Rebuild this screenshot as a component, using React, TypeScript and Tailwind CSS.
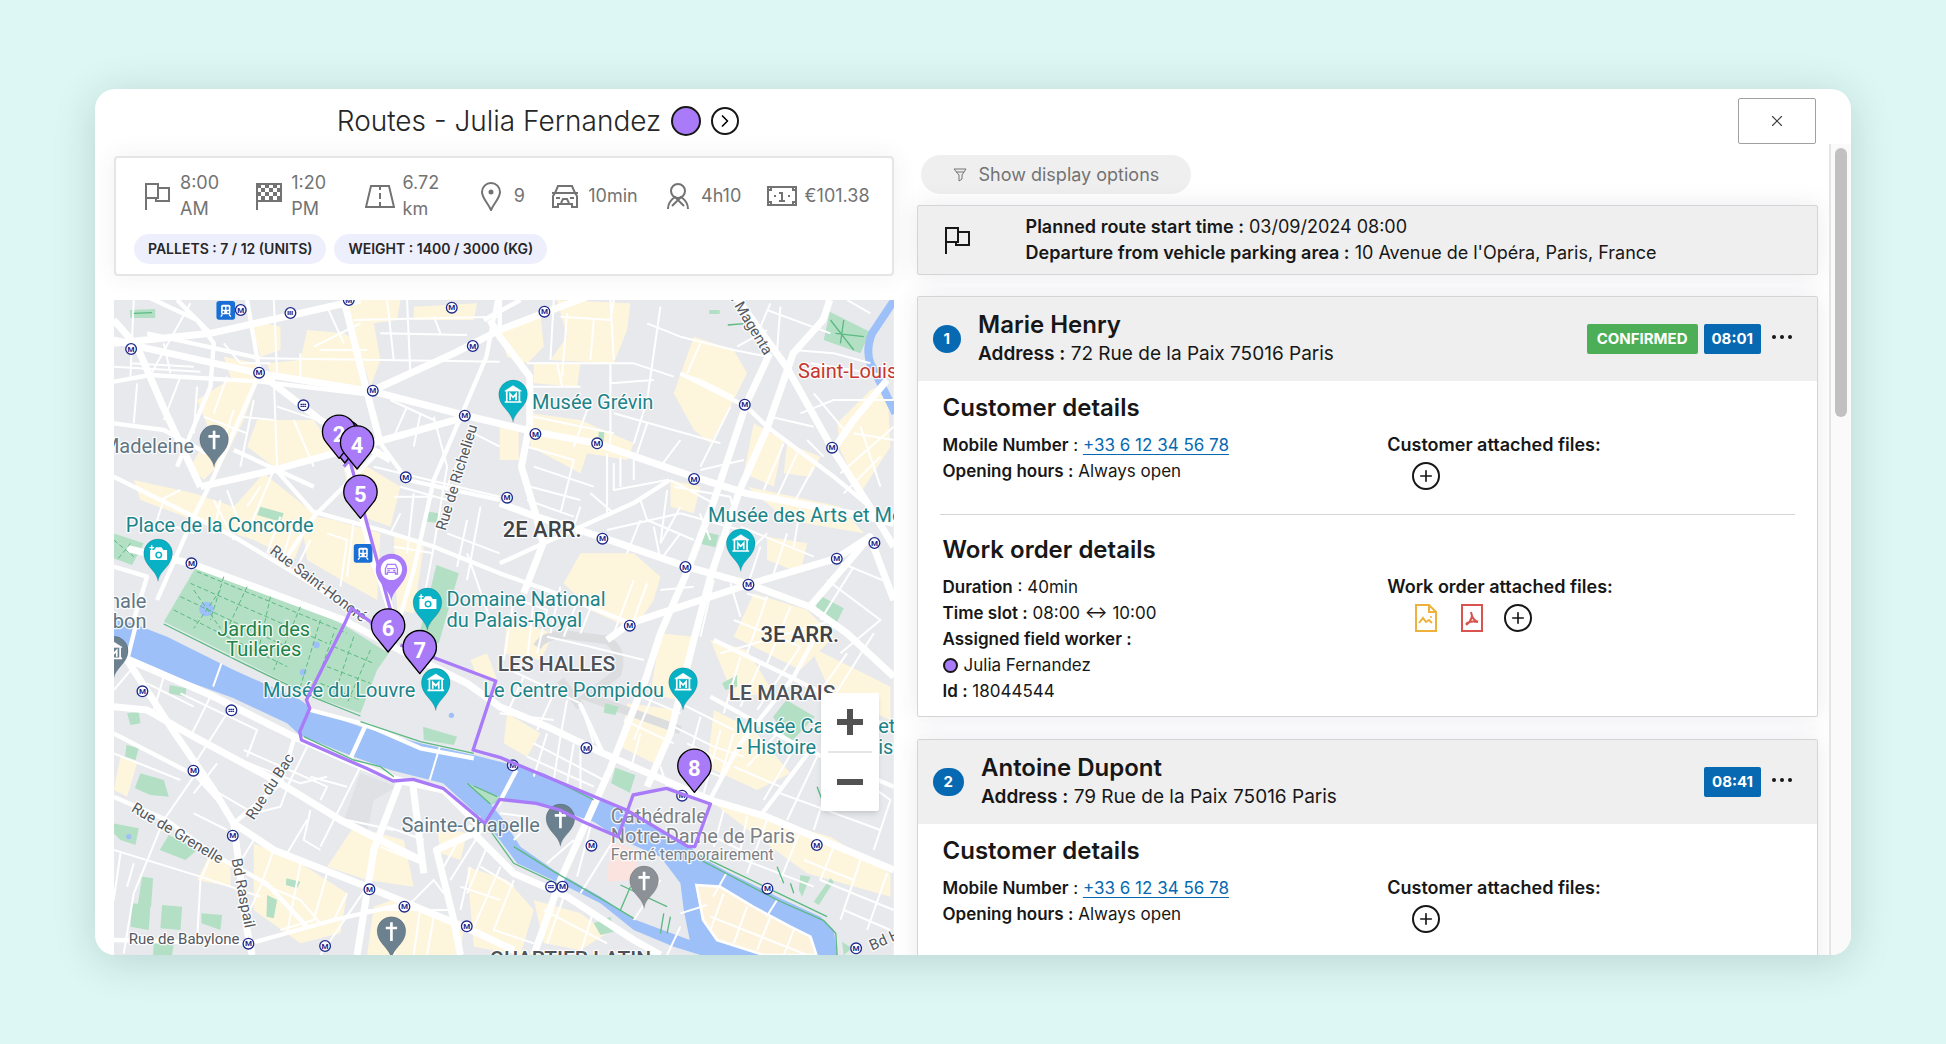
import type { ReactNode } from "react";
import { ChevronRight, Plus, X } from "lucide-react";

type Point = [number, number];

const PURPLE = "#a97bf8";

/* ---------- Map data (map units) ---------- */

const commercial = [
  "M250 300 L360 230 L430 250 L390 360 L330 480 L270 540 L230 500 L290 400 Z",
  "M410 60 L500 80 L500 150 L440 170 Z",
  "M330 170 L430 190 L420 260 L350 230 Z",
  "M580 90 L690 100 L740 130 L760 260 L640 250 L470 220 L460 190 L560 180 Z",
  "M690 0 L860 0 L850 60 L780 70 L800 180 L770 260 L720 90 Z",
  "M900 20 L1090 10 L1080 60 L900 60 Z",
  "M430 360 L600 360 L660 450 L480 500 L400 440 Z",
  "M60 540 L240 580 L360 620 L450 520 L600 640 L540 780 L420 720 L240 660 L80 600 Z",
  "M560 640 L660 660 L800 700 L790 900 L700 850 L580 780 Z",
  "M680 460 L760 500 L860 560 L830 680 L720 640 Z",
  "M840 700 L930 740 L900 940 L850 930 Z",
  "M1158 100 L1280 40 L1290 140 L1240 190 L1180 170 Z",
  "M1330 0 L1550 10 L1540 90 L1500 190 L1310 180 L1360 110 Z",
  "M1260 190 L1400 190 L1390 260 L1260 250 Z",
  "M1250 340 L1400 360 L1560 430 L1540 480 L1420 460 L1400 520 L1250 440 Z",
  "M1158 380 L1215 380 L1215 480 L1158 480 Z",
  "M1740 110 L1860 150 L1900 220 L1850 320 L1790 430 L1740 390 L1680 280 Z",
  "M1920 370 L2010 420 L1980 560 L1890 520 Z",
  "M2020 430 L2120 470 L2090 530 L2010 520 Z",
  "M2170 370 L2270 270 L2320 250 L2330 440 L2240 580 L2180 450 Z",
  "M1900 560 L2180 620 L2250 700 L2020 660 Z",
  "M1670 540 L1760 560 L1740 640 L1670 620 Z",
  "M1400 760 L1560 760 L1640 830 L1620 900 L1560 990 L1430 930 L1350 850 Z",
  "M1960 710 L2080 730 L2060 820 L1960 780 Z",
  "M1920 880 L2080 930 L2160 1010 L2060 1110 L1860 1010 Z",
  "M1640 1000 L1740 1010 L1690 1200 L1610 1180 Z",
  "M1540 1210 L1690 1230 L1640 1400 L1520 1340 Z",
  "M1180 960 L1320 1000 L1280 1080 L1170 1060 Z",
  "M1120 1060 L1150 1140 L1090 1130 L1070 1080 Z",
  "M1180 1240 L1280 1300 L1240 1370 L1170 1330 Z",
  "M1790 1020 L1900 1050 L1980 1180 L1860 1190 Z",
  "M2090 1040 L2330 1160 L2330 1260 L2150 1180 Z",
  "M1800 1230 L1920 1290 L2030 1420 L1930 1470 L1780 1400 Z",
  "M1800 1510 L2150 1610 L2330 1720 L2330 1790 L2080 1720 L1930 1610 Z",
  "M720 1580 L870 1620 L900 1760 L760 1740 L640 1700 Z",
  "M420 1630 L560 1690 L700 1780 L680 1900 L560 1930 L420 1830 Z",
  "M290 1660 L350 1700 L350 1760 L250 1740 Z",
  "M20 1370 L70 1390 L40 1490 L0 1470 Z",
  "M860 1790 L1050 1880 L1040 1965 L760 1965 L780 1820 Z",
  "M1060 1700 L1180 1740 L1260 1830 L1220 1965 L1080 1940 Z",
  "M1260 1800 L1400 1840 L1480 1900 L1400 1950 L1290 1930 Z",
  "M1770 1770 L1900 1830 L2060 1930 L1900 1930 L1800 1880 Z",
  "M970 1580 L1060 1600 L1040 1680 L980 1660 Z",
];

const parks = [
  "M250 795 L560 910 L690 975 L825 1060 L790 1110 L740 1240 L600 1190 L400 1090 L150 965 Z",
  "M0 700 L90 730 L55 795 L0 775 Z",
  "M968 795 L1035 820 L975 1030 L915 1010 Z",
  "M2148 35 L2268 95 L2240 160 L2130 120 Z",
  "M48 30 L124 27 L124 54 L50 54 Z",
  "M440 620 L510 640 L500 665 L430 645 Z",
  "M945 635 L975 640 L970 668 L940 665 Z",
  "M1455 395 L1472 395 L1468 440 L1452 430 Z",
  "M1770 695 L1815 705 L1805 742 L1762 732 Z",
  "M1786 30 L1818 30 L1818 42 L1786 42 Z",
  "M2115 885 L2190 925 L2165 975 L2105 930 Z",
  "M1978 1250 L2018 1200 L2103 1250 L2028 1330 Z",
  "M1505 1403 L1565 1425 L1548 1478 L1492 1450 Z",
  "M1825 1150 L1870 1125 L1870 1160 L1835 1170 Z",
  "M1474 1210 L1515 1220 L1505 1245 L1470 1238 Z",
  "M1440 1870 L1490 1850 L1500 1895 L1460 1905 Z",
  "M80 1420 L150 1440 L165 1490 L110 1485 L63 1465 Z",
  "M165 1605 L215 1630 L250 1650 L215 1680 L138 1650 Z",
  "M0 1570 L75 1585 L65 1635 L20 1620 L0 1600 Z",
  "M85 1730 L118 1735 L112 1820 L72 1815 Z",
  "M55 1810 L110 1815 L105 1890 L50 1880 Z",
  "M145 1815 L205 1820 L200 1890 L140 1885 Z",
  "M263 1840 L325 1845 L320 1890 L263 1870 Z",
  "M460 1785 L490 1800 L480 1855 L458 1850 Z",
  "M40 1240 L75 1235 L80 1270 L50 1275 Z",
  "M168 1155 L218 1165 L215 1190 L165 1180 Z",
  "M38 1335 L75 1345 L65 1380 L34 1370 Z",
  "M928 1280 L1030 1310 L1020 1335 L930 1320 Z",
  "M518 1735 L560 1745 L550 1765 L516 1755 Z",
  "M2150 1735 L2160 1745 L2115 1815 L2100 1805 Z",
  "M2060 1725 L2090 1730 L2065 1790 L2055 1770 Z",
  "M1690 1860 L1730 1920 L1690 1905 Z",
  "M120 1930 L180 1930 L175 1965 L118 1965 Z",
  "M2185 1925 L2215 1945 L2190 1965 Z",
];

const parkPaths =
  "M250 815 L700 1000 M230 850 L640 1030 M200 890 L560 1060 M180 930 L520 1100 M330 830 L290 960 M400 860 L330 1010 M470 890 L430 1070 M560 920 L480 1110 M620 960 L560 1160 M660 1000 L600 1170 M720 1010 L660 1190 M770 1050 L700 1210 M240 870 L320 985 M320 870 L240 985 M660 1040 L780 1090 M640 1100 L770 1150 M620 1150 L740 1200 M0 720 L60 770 M50 730 L10 780";

const greenLines =
  "M150 972 L400 1096 L600 1192 L740 1248 M570 1310 L720 1380 L800 1400 L840 1430 M740 1265 L920 1325 L1080 1360 M1760 1680 L1990 1800 L2130 1862 L2166 1900 L2170 1965 M1745 1660 L1990 1778 L2140 1850 M1200 1640 L1320 1715 L1460 1795 L1560 1855 M1110 1565 L1200 1690 L1360 1765 M1290 1425 L1440 1500 M1060 1450 L1130 1512 M1080 1458 L1150 1490 M1520 1830 L1550 1760 M1520 1755 L1660 1820 M1650 1840 L1640 1900 M1670 1850 L1660 1900 M1990 1700 L2010 1750 M2030 1750 L2040 1780 M2110 1460 L2125 1500 M1842 75 L1900 70 M60 40 L115 38 M2150 60 L2220 150 M2165 100 L2250 110 M2190 60 L2180 130";

const majorRoads = [
  "M0 130 L290 100 L670 15 L740 0",
  "M0 120 L100 145 L438 220 L780 275 L1050 345 L1258 395 L1450 430 L1738 530 L1898 580 L2258 650 L2340 670",
  "M0 60 L70 140 L150 325 L260 560",
  "M260 560 L480 510 L660 460 L810 420 L1060 350",
  "M438 220 L620 360 L760 440 L830 480",
  "M690 0 L758 270 L800 430",
  "M700 490 L770 740 L830 930 L850 1020",
  "M780 270 L1020 160 L1158 90 L1420 -10",
  "M1128 60 L1158 110 L1248 230 L1248 370 L1223 500 L1268 650 L1288 730 L1230 880",
  "M1968 160 L1898 310 L1798 610 L1718 820 L1640 1000 L1598 1130 L1488 1410 L1340 1740 L1260 1965",
  "M1858 -20 L2018 200 L2158 450 L2268 620 L2340 740",
  "M2148 0 L2128 60 L2038 160 L1958 390 L1878 570 L1790 830 L1740 1020 L1670 1300 L1600 1460",
  "M1158 610 L1268 650 L1458 710 L1718 800 L1898 850 L2088 920 L2200 1000 L2340 1130",
  "M1480 1020 L1548 970 L1898 855 L2168 775 L2268 710",
  "M2158 450 L2220 360 L2320 240",
  "M2088 920 L2268 710 L2340 900",
  "M40 745 L230 790 L690 960 L858 1050 L1060 1150 L1158 1220 L1300 1280 L1468 1360 L1650 1440 L1790 1500 L1958 1550 L2340 1710",
  "M0 1060 L60 1085 L290 1185 L540 1310 L720 1390 L850 1440 L990 1470 L1110 1590",
  "M40 1080 L170 1280 L300 1470 L360 1570 L400 1890 L415 1965",
  "M0 1220 L100 1230 L240 1310 L500 1450 L680 1560 L920 1680",
  "M360 1570 L480 1650 L760 1760 L880 1810 L1050 1880 L1200 1950",
  "M1060 1580 L1200 1720 L1360 1790 L1560 1920 L1640 1965",
  "M860 1440 L780 1650 L730 1965",
  "M898 1460 L930 1720",
  "M1100 1590 L968 1650 L1020 1860 L1040 1965",
];

const mediumRoads = [
  "M0 530 L140 600 L360 710 L560 830 L760 960",
  "M400 0 L438 220 L300 530 L240 650",
  "M478 500 L598 635 L800 690 L960 740 L1158 820 L1300 870 L1550 970",
  "M1150 0 L1118 170 L960 540 L900 810 L830 1050",
  "M1700 220 L1898 320 L1960 380 L2160 530 L2268 620",
  "M1158 790 L1290 730 L1558 610 L1668 540",
  "M540 1320 L500 1450 L360 1570",
  "M0 1490 L158 1560 L310 1670 L458 1750 L580 1880",
  "M0 1920 L410 1930 L660 1860 L880 1810",
  "M0 1300 L250 1430 L340 1530",
  "M1790 1190 L2058 1340 L2340 1460",
  "M1788 1500 L1880 1330 L2040 1130 L2110 1000",
  "M1938 1550 L2090 1350",
  "M1800 1020 L2028 1130 L2340 1290",
  "M0 245 L110 225 L440 245 L780 285",
  "M100 -10 L250 60 L300 130 L290 260 L190 500",
  "M190 0 L290 100 M0 370 L150 390 L280 460",
  "M0 800 L100 830 L60 960",
  "M100 100 L440 175",
  "M1398 1210 L1468 1360",
  "M758 1270 L708 1380",
  "M70 960 L40 1080",
  "M590 1230 L760 1275 L920 1345 L1080 1375",
  "M1208 1410 L1150 1520",
  "M500 800 L600 650 L800 450",
  "M360 450 L600 560 M240 650 L130 900",
  "M800 430 L880 540 L1158 600",
  "M1158 110 L1158 0 M1110 60 L1220 0",
];

const minorRoads = [
  "M60 0 L50 230 M110 225 L230 10 M0 200 L260 215 M50 190 L240 200 M200 230 L150 360 M70 250 L60 370 M150 130 L170 220 M330 130 L380 190 L470 190",
  "M440 175 L1158 185 M480 0 L490 220 M560 160 L560 240 M600 140 L740 70 M620 150 L760 150 M640 20 L690 130 M800 100 L1060 105 M820 0 L840 180 M880 0 L890 230 M960 50 L980 100 M720 60 L1158 50",
  "M480 230 L490 500 M540 360 L600 500 M420 300 L380 500 M360 330 L310 480 M340 230 L300 340 M270 350 L400 400 M250 260 L240 400 M380 350 L480 360 M490 320 L640 370",
  "M830 300 L960 360 M880 320 L840 410 M920 340 L900 440 M960 350 L1000 500 M780 500 L1158 590 M860 560 L1000 600 M840 590 L960 590 M900 580 L880 760 M1000 500 L960 740 M1080 400 L1158 440 M1060 420 L1000 560",
  "M480 510 L400 700 M440 560 L400 620 M340 570 L380 680 M300 600 L360 720 M200 570 L140 600 M150 600 L130 660 L240 700 M320 600 L300 700 M500 650 L460 760 M540 660 L500 800 M590 720 L540 820",
  "M640 700 L700 720 L680 860 M720 660 L700 830 M760 760 L820 900 M860 640 L830 700 M840 740 L960 760 M1060 660 L1030 800 M1100 620 L1060 840 M960 740 L920 950 M1000 700 L1158 760 M1060 760 L1130 960",
  "M1320 0 L1310 180 M1500 0 L1490 60 L1340 50 M1360 40 L1345 230 M1440 60 L1430 180 M1500 180 L1490 0 M1640 20 L1600 300 M1600 70 L1700 110 L1860 150 L1960 170 M1240 190 L1560 190 L1680 230 M1240 260 L1400 260 M1330 190 L1345 260 M1490 190 L1490 250 L1620 240",
  "M1760 130 L1720 220 M1600 300 L1560 430 M1490 230 L1490 430 M1500 340 L1820 430 M1420 330 L1380 440 M1260 350 L1500 400 M1600 370 L1570 460 M1700 420 L1640 500 M1850 320 L1760 500 M1700 220 L1760 240 L1860 290 M1760 510 L1890 480",
  "M1240 440 L1380 480 L1340 640 M1260 500 L1440 560 M1250 560 L1400 600 M1240 600 L1380 650 M1480 460 L1480 640 M1500 490 L1500 570 L1660 540 M1520 470 L1520 560 M1560 480 L1560 540 M1580 600 L1600 660 L1740 720 M1430 580 L1500 640 M1480 690 L1700 640 M1400 620 L1380 680",
  "M1680 560 L1850 590 L1860 640 M1660 570 L1640 730 M1700 640 L1880 690 M1640 730 L1700 620 M1580 660 L1540 760 M1620 680 L1640 780 L1700 700 M1670 540 L1800 610 M2060 620 L2040 740 M1880 680 L2100 770 M1880 780 L1960 700 M1940 740 L1900 860 M2020 700 L1980 820",
  "M1960 400 L1900 540 M2010 430 L1950 570 M2050 460 L1990 590 M2100 500 L2040 610 M2080 420 L2130 470 M1970 350 L2100 380 M2060 340 L2160 300 L2340 300 M2100 280 L2200 400 M2220 400 L2340 420 M2340 380 L2180 520 M2240 380 L2300 560 M2300 470 L2190 580",
  "M2040 150 L2160 160 L2270 190 M2060 130 L2150 20 M2000 20 L1990 150 M1960 30 L2150 100 M1940 80 L1970 10 M2200 0 L2270 40 M2090 190 L2340 230 M1960 90 L1870 140",
  "M1560 840 L1500 1000 M1600 850 L1560 960 M1640 870 L1740 860 M1758 640 L1790 720 M1800 840 L1760 1010 M1850 850 L1880 950 M1900 880 L1960 900 M1860 960 L2060 1040 M1820 1060 L2160 960 M1960 890 L1900 1060 M2030 920 L1960 1090 M2140 840 L2300 960 L2180 1060 M2220 800 L2120 960 M2160 780 L2330 850",
  "M1158 880 L1300 930 L1270 1060 M1340 860 L1310 1000 M1200 900 L1170 1080 M1260 900 L1240 1080 M1400 880 L1350 1010 M1440 900 L1400 1000 M1300 1010 L1430 1040 L1590 1080 M1190 1110 L1400 1210 L1440 1330 M1320 1180 L1270 1290 M1360 1200 L1340 1310 M1230 1130 L1180 1240",
  "M1158 1240 L1320 1260 M1300 1300 L1260 1430 M1340 1310 L1320 1440 M1380 1330 L1360 1450 M1260 1330 L1470 1440 M1240 1370 L1440 1460 M1500 1370 L1480 1430 M1400 1340 L1400 1470",
  "M1560 1180 L1700 1240 M1530 1260 L1680 1330 M1580 1300 L1550 1410 M1620 1180 L1560 1320 M1640 1400 L1660 1460 M1680 1280 L1800 1340 L1890 1370 M1700 1210 L1860 1290 M1760 1250 L1720 1400 M1820 1290 L1770 1480 M1860 1300 L1820 1430 M1720 1330 L1840 1390 M1700 1380 L1820 1430",
  "M1880 1070 L1830 1240 M1940 1090 L1880 1220 M1930 1230 L2060 1040 M2000 1290 L1900 1400 M2050 1330 L1950 1500 M2110 1370 L2020 1560 M2160 1400 L2100 1590 M1860 1400 L2000 1460 M2200 1060 L2100 1200 M2280 1000 L2160 1190 M2260 1250 L2180 1400 M2220 1420 L2330 1500 L2280 1650 M2000 1480 L2300 1590",
  "M1830 1530 L1800 1640 M1900 1550 L1880 1650 L1780 1600 M1960 1560 L1900 1720 M2060 1590 L2000 1740 M1840 1660 L2100 1760 M2160 1640 L2120 1740 L2340 1830 M2240 1680 L2180 1860 M2320 1720 L2260 1890 M2070 1680 L2220 1740 M2190 1830 L2330 1890",
  "M1158 1540 L1240 1550 M1260 1560 L1200 1620 M1430 1580 L1390 1730 M1500 1620 L1400 1780 M1380 1620 L1300 1690 M1560 1860 L1640 1740 M1700 1880 L1660 1965 M1400 1960 L1440 1830 M1290 1830 L1480 1930 M1350 1790 L1300 1930 M1200 1740 L1140 1890 L1260 1930 M1160 1700 L1080 1880",
  "M60 1100 L0 1170 M120 1230 L150 1130 M200 1180 L430 1290 L400 1370 M100 1150 L240 1220 M290 1190 L230 1310 M340 1240 L250 1380 M380 1380 L560 1450 L640 1430 M460 1280 L720 1380 M580 1340 L520 1460 M390 1350 L640 1460 L620 1500 M740 1400 L620 1640 M700 1460 L590 1430",
  "M240 1430 L150 1560 L60 1780 L30 1960 M310 1390 L240 1480 M0 1360 L200 1440 M0 1650 L260 1730 L440 1790 M300 1650 L260 1740 L250 1920 M20 1660 L0 1800 M60 1690 L40 1760 M300 1470 L420 1540 L500 1520 L530 1440 M340 1590 L240 1540 M420 1620 L370 1700",
  "M590 1530 L570 1620 L620 1650 M520 1660 L580 1560 M700 1560 L840 1590 M480 1650 L440 1760 L400 1850 M560 1690 L520 1900 M440 1750 L560 1800 L620 1870 M640 1720 L600 1860 L500 1890 M700 1780 L660 1860 M760 1760 L620 1965 M820 1580 L930 1620 M800 1640 L920 1690",
  "M880 1820 L960 1740 L990 1780 M920 1820 L900 1965 M760 1830 L1010 1830 M870 1860 L840 1965 M960 1850 L940 1965 M1040 1760 L1160 1800 M1070 1700 L1040 1830 M1010 1740 L1110 1580 M1120 1640 L1060 1780 M1100 1700 L1200 1760 M940 1560 L1080 1590 M1040 1610 L990 1700",
  "M1830 1780 L1790 1890 M1900 1820 L1860 1930 M1970 1850 L1930 1950 M2040 1890 L2010 1965 M1790 1850 L2080 1965",
  "M323 1090 L298 1160 M978 1340 L948 1440 M1838 1720 L1798 1790 M1990 1800 L1958 1850 M1700 1840 L1780 1815",
];

const metros: Point[] = [
  [381, 30], [705, 0], [1014, 23], [52, 147], [1077, 138], [436, 218], [777, 272],
  [1053, 347], [876, 532], [233, 790], [1292, 35], [1893, 314], [1265, 402],
  [1450, 430], [2155, 443], [1741, 537], [1180, 593], [1466, 716], [2282, 729],
  [2169, 776], [1715, 801], [1904, 854], [1548, 977], [86, 1174], [239, 1412],
  [357, 1607], [767, 1768], [872, 1820], [1059, 1879], [404, 1931], [634, 1938],
  [1418, 1344], [1197, 1396], [1705, 1487], [1433, 1637], [1346, 1760],
  [2109, 1635], [1961, 1766], [2227, 1945],
];

const rers: Point[] = [[530, 39], [569, 316], [353, 1231], [1312, 1760]];
const trains: Point[] = [[336, 31], [748, 760]];

type PoiKind = "museum" | "camera" | "church";

const pois: { x: number; y: number; kind: PoiKind; color: string }[] = [
  { x: 301, y: 418, kind: "church", color: "#6b8190" },
  { x: 133, y: 760, kind: "camera", color: "#08b1c4" },
  { x: 941, y: 907, kind: "camera", color: "#08b1c4" },
  { x: 1198, y: 283, kind: "museum", color: "#08b1c4" },
  { x: 1881, y: 730, kind: "museum", color: "#08b1c4" },
  { x: 966, y: 1148, kind: "museum", color: "#08b1c4" },
  { x: 1708, y: 1146, kind: "museum", color: "#08b1c4" },
  { x: 0, y: 1052, kind: "museum", color: "#6b8190" },
  { x: 1340, y: 1555, kind: "church", color: "#6b8190" },
  { x: 1591, y: 1741, kind: "church", color: "#8b9196" },
  { x: 833, y: 1893, kind: "church", color: "#6b8190" },
];

const stopPins = [
  { x: 693, y: 409, label: "" },
  { x: 676, y: 395, label: "2" },
  { x: 730, y: 427, label: "4" },
  { x: 740, y: 575, label: "5" },
  { x: 823, y: 976, label: "6" },
  { x: 918, y: 1041, label: "7" },
  { x: 1742, y: 1397, label: "8" },
];

type Label = {
  x: number;
  y: number;
  text: string;
  color: string;
  size?: number;
  anchor?: "start" | "middle" | "end";
  angle?: number;
  weight?: number;
};

const TEAL = "#1b8489";
const SLATE = "#5f7684";
const STREET = "#55585c";

const labels: Label[] = [
  { x: 241, y: 460, text: "Madeleine", color: SLATE, anchor: "end" },
  { x: 36, y: 697, text: "Place de la Concorde", color: TEAL },
  { x: 1255, y: 327, text: "Musée Grévin", color: TEAL },
  { x: 998, y: 918, text: "Domaine National", color: TEAL },
  { x: 998, y: 980, text: "du Palais-Royal", color: TEAL },
  { x: 450, y: 1007, text: "Jardin des", color: "#22834a", anchor: "middle" },
  { x: 450, y: 1069, text: "Tuileries", color: "#22834a", anchor: "middle" },
  { x: 448, y: 1191, text: "Musée du Louvre", color: TEAL },
  { x: 1651, y: 1190, text: "Le Centre Pompidou", color: TEAL, anchor: "end" },
  { x: 1865, y: 1300, text: "Musée Carnavalet", color: TEAL },
  { x: 1868, y: 1362, text: "- Histoire de Paris", color: TEAL },
  { x: 1783, y: 667, text: "Musée des Arts et Métiers", color: TEAL },
  { x: 2053, y: 233, text: "Saint-Louis", color: "#c5362e" },
  { x: 863, y: 1597, text: "Sainte-Chapelle", color: SLATE },
  { x: 1491, y: 1568, text: "Cathédrale", color: "#7c8186" },
  { x: 1491, y: 1630, text: "Notre-Dame de Paris", color: "#7c8186" },
  { x: 1491, y: 1680, text: "Fermé temporairement", color: "#7c8186", size: 48 },
  { x: 98, y: 925, text: "Assemblée nationale", color: SLATE, anchor: "end" },
  { x: 98, y: 985, text: "Palais Bourbon", color: SLATE, anchor: "end" },
  { x: 1285, y: 710, text: "2E ARR.", color: "#3f4246", anchor: "middle", size: 66, weight: 500 },
  { x: 2058, y: 1026, text: "3E ARR.", color: "#3f4246", anchor: "middle", size: 66, weight: 500 },
  { x: 1328, y: 1113, text: "LES HALLES", color: "#4e5156", anchor: "middle", size: 63, weight: 500 },
  { x: 1845, y: 1200, text: "LE MARAIS", color: "#4e5156", size: 63, weight: 500 },
  { x: 1370, y: 1998, text: "QUARTIER LATIN", color: "#4e5156", anchor: "middle", size: 63, weight: 500 },
  { x: 995, y: 694, text: "Rue de Richelieu", color: STREET, size: 45, angle: -73 },
  { x: 466, y: 758, text: "Rue Saint-Honoré", color: STREET, size: 45, angle: 37 },
  { x: 420, y: 1562, text: "Rue du Bac", color: STREET, size: 45, angle: -57 },
  { x: 50, y: 1532, text: "Rue de Grenelle", color: STREET, size: 45, angle: 31 },
  { x: 353, y: 1678, text: "Bd Raspail", color: STREET, size: 45, angle: 79 },
  { x: 45, y: 1933, text: "Rue de Babylone", color: STREET, size: 45 },
  { x: 2275, y: 1952, text: "Bd Henri IV", color: STREET, size: 45, angle: -24 },
  { x: 1952, y: 168, text: "Bd de Magenta", color: STREET, size: 45, angle: 59, anchor: "end" },
];

/* ---------- Map pieces ---------- */

function PoiGlyph({ kind }: { kind: PoiKind }) {
  if (kind === "church") {
    return <path d="M0 -26 V30 M-17 -9 H17" stroke="#fff" strokeWidth="8" fill="none" />;
  }
  if (kind === "camera") {
    return (
      <g>
        <path d="M-24 -10 H-12 L-6 -18 H10 L16 -10 H27 V20 H-24 Z" fill="#fff" />
        <circle cx="2" cy="5" r="10" fill="#08b1c4" stroke="#08b1c4" />
        <circle cx="2" cy="5" r="6" fill="#fff" />
        <path d="M-19 -24 V-10 M-26 -17 H-12" stroke="#fff" strokeWidth="4" />
      </g>
    );
  }
  return (
    <g fill="none" stroke="#fff" strokeWidth="5">
      <path d="M-25 -10 L0 -26 L25 -10 Z" fill="#fff" strokeWidth="2" />
      <path d="M-19 -10 V22 M19 -10 V22 M-25 23 H25" />
      <path d="M-9 18 V-1 L0 9 L9 -1 V18" />
    </g>
  );
}

function CityMap() {
  return (
    <svg
      viewBox="0 0 2340 1965"
      preserveAspectRatio="xMidYMid slice"
      className="absolute inset-0 h-full w-full font-[Roboto,sans-serif]"
      role="img"
      aria-label="Map"
    >
      <rect width="2340" height="1965" fill="#e7e9ed" />
      <g fill="#fef5dd">
        {commercial.map((d) => (
          <path key={d} d={d} />
        ))}
      </g>
      <path
        d="M1270 1040 Q1300 990 1400 1010 L1480 1020 Q1530 1050 1510 1120 L1420 1190 L1700 1290 M1340 1140 L1400 1220"
        fill="none"
        stroke="#dcdddf"
        strokeWidth="26"
      />
      <path d="M850 1460 L780 1500 L760 1600 L690 1560 L740 1420 Z" fill="#dfe1e4" />
      <g fill="#b3e0c4">
        {parks.map((d) => (
          <path key={d} d={d} />
        ))}
      </g>

      {/* Seine and canal */}
      <g fill="#9dc0f9">
        <path d="M0 960 L55 970 L160 1010 L360 1110 L560 1200 L600 1230 L740 1280 L920 1330 L1080 1365 L1158 1385 L1290 1420 L1440 1495 L1540 1530 L1730 1640 L1760 1670 L1840 1715 L1990 1790 L2120 1850 L2160 1890 L2170 1965 L1760 1965 L1680 1940 L1560 1890 L1460 1810 L1360 1760 L1210 1690 L1158 1620 L1108 1560 L988 1450 L830 1410 L720 1370 L558 1305 L520 1270 L360 1195 L210 1140 L33 1070 L0 1060 Z" />
        <circle cx="278" cy="927" r="22" />
        <circle cx="608" cy="1035" r="10" />
        <circle cx="568" cy="1117" r="10" />
        <circle cx="1013" cy="1246" r="8" />
        <circle cx="45" cy="1610" r="8" />
      </g>
      <path
        d="M2345 -5 L2275 100 Q2255 150 2270 190 L2298 245 L2345 340"
        fill="none"
        stroke="#9dc0f9"
        strokeWidth="24"
      />
      <path
        d="M1053 1447 L1133 1515 L1158 1500 L1290 1515 L1440 1565 L1510 1612 L1570 1640 L1640 1670 L1700 1750 L1710 1830 L1728 1920 L1560 1858 L1460 1790 L1320 1710 L1220 1640 L1165 1555 L1133 1515 Z"
        fill="#e7e9ed"
      />
      <path d="M1053 1447 L1133 1515 L1158 1492 Z" fill="#b3e0c4" />
      <path d="M1490 1625 L1570 1650 L1568 1740 L1480 1745 Z" fill="#fbe3e0" />
      <path
        d="M1748 1755 L1818 1760 L1918 1820 L2030 1880 L2090 1910 L2108 1965 L1950 1965 L1810 1920 L1768 1860 Z"
        fill="#fdf3dc"
        stroke="#fff"
        strokeWidth="8"
      />

      {/* Streets */}
      <g fill="none" stroke="#fff" strokeLinejoin="round">
        <g strokeWidth="6">
          {minorRoads.map((d) => (
            <path key={d} d={d} />
          ))}
        </g>
        <g strokeWidth="13">
          {mediumRoads.map((d) => (
            <path key={d} d={d} />
          ))}
        </g>
        <g strokeWidth="21">
          {majorRoads.map((d) => (
            <path key={d} d={d} />
          ))}
        </g>
      </g>
      <path d={parkPaths} fill="none" stroke="#5cb982" strokeWidth="3" strokeDasharray="14 8" />
      <path d={greenLines} fill="none" stroke="#5cb982" strokeWidth="4" />

      {/* Transit stations */}
      {metros.map(([x, y]) => (
        <g key={`${x}-${y}`} transform={`translate(${x} ${y})`}>
          <circle r="16" fill="#fff" stroke="#1f2a8c" strokeWidth="4" />
          <text y="8" fontSize="24" fontWeight="700" textAnchor="middle" fill="#1f2a8c">
            M
          </text>
        </g>
      ))}
      {rers.map(([x, y]) => (
        <g key={`${x}-${y}`} transform={`translate(${x} ${y})`}>
          <circle r="16" fill="#fff" stroke="#1f2a8c" strokeWidth="4" />
          <path d="M-9 -3 H9 M-9 3 H9" stroke="#1f2a8c" strokeWidth="4" strokeDasharray="5 1" />
        </g>
      ))}
      {trains.map(([x, y]) => (
        <g key={`${x}-${y}`} transform={`translate(${x} ${y})`}>
          <rect x="-28" y="-28" width="56" height="56" rx="8" fill="#1a6fd6" />
          <rect x="-14" y="-17" width="28" height="29" rx="5" fill="#fff" />
          <path d="M-9 -11 H-2 V-2 H-9 Z M2 -11 H9 V-2 H2 Z" fill="#1a6fd6" />
          <circle cx="-7" cy="5" r="3" fill="#1a6fd6" />
          <circle cx="7" cy="5" r="3" fill="#1a6fd6" />
          <path d="M-10 12 L-15 19 M10 12 L15 19" stroke="#fff" strokeWidth="4" />
        </g>
      ))}

      {/* Points of interest */}
      {pois.map((p) => (
        <g key={`${p.x}-${p.y}`} transform={`translate(${p.x} ${p.y})`}>
          <path
            d="M0 84 C-5 50 -43 38 -43 0 A43 43 0 1 1 43 0 C43 38 5 50 0 84 Z"
            fill={p.color}
            stroke="#00000030"
            strokeWidth="2"
          />
          <PoiGlyph kind={p.kind} />
        </g>
      ))}

      {labels.map((l) => (
        <text
          key={l.text}
          transform={`translate(${l.x} ${l.y}) rotate(${l.angle ?? 0})`}
          fontSize={l.size ?? 60}
          fontWeight={l.weight ?? 400}
          textAnchor={l.anchor ?? "start"}
          fill={l.color}
          stroke="#ffffffd9"
          strokeWidth="8"
          strokeLinejoin="round"
          paintOrder="stroke"
        >
          {l.text}
        </text>
      ))}

      {/* Route */}
      <path
        d="M690 500 L708 480 L830 930 L823 1050 L770 965 L713 925 L693 970 L578 1200 L588 1225 L558 1295 L563 1320 L758 1405 L838 1443 L898 1438 L988 1465 L1113 1570 L1158 1498 L1268 1510 L1338 1530 L1408 1565 L1513 1610 L1558 1485 L1658 1465 L1790 1512 L1743 1640 L1723 1640 L1538 1530 L1158 1372 L1078 1350 L1146 1143 L860 1035"
        fill="none"
        stroke={PURPLE}
        strokeWidth="10"
        strokeLinejoin="round"
      />

      {/* Vehicle */}
      <g transform="translate(833 808)">
        <path
          d="M0 94 C-5 60 -47 40 -47 0 A47 47 0 1 1 47 0 C47 40 5 60 0 94 Z"
          fill={PURPLE}
        />
        <circle r="32" fill="#fff" />
        <path
          d="M-18 -2 L-12 -15 H12 L18 -2 V14 H12 V9 H-12 V14 H-18 Z M-13 -2 H13"
          fill="none"
          stroke={PURPLE}
          strokeWidth="4"
        />
        <path d="M-12 4 H-5 M5 4 H12" stroke={PURPLE} strokeWidth="4" />
      </g>

      {stopPins.map((p) => (
        <g key={`${p.x}-${p.y}`} transform={`translate(${p.x} ${p.y})`}>
          <path
            d="M0 80 L-38 33 A50 50 0 1 1 38 33 Z"
            fill={PURPLE}
            stroke="#000"
            strokeWidth="4"
            strokeLinejoin="round"
          />
          {p.label && (
            <text y="32" fontSize="66" fontWeight="700" textAnchor="middle" fill="#fff">
              {p.label}
            </text>
          )}
        </g>
      ))}
    </svg>
  );
}

/* ---------- Icons ---------- */

function Icon({ className, children }: { className: string; children: ReactNode }) {
  return (
    <svg
      viewBox="0 0 30 30"
      className={className}
      fill="none"
      stroke="currentColor"
      strokeWidth="2"
      aria-hidden="true"
    >
      {children}
    </svg>
  );
}

function FlagIcon({ className }: { className: string }) {
  return (
    <Icon className={className}>
      <path d="M4 29 V3 H16 V17 H4 M16 7 H27 V20 H14 V17" />
    </Icon>
  );
}

const checks: Point[] = [];
for (let row = 0; row < 4; row++) {
  for (let col = 0; col < 6; col++) {
    if ((row + col) % 2 === 0) checks.push([4 + col * 4, 3 + row * 4]);
  }
}

function CheckeredFlagIcon({ className }: { className: string }) {
  return (
    <Icon className={className}>
      <path d="M4 29 V3 H28 V20 H4" />
      {checks.map(([x, y]) => (
        <rect key={`${x}-${y}`} x={x} y={y} width="4" height="4" fill="currentColor" stroke="none" />
      ))}
    </Icon>
  );
}

function RoadIcon({ className }: { className: string }) {
  return (
    <Icon className={className}>
      <path d="M6 5 H24 L29 26 H1 Z M15 5 V9 M15 12 V18 M15 21 V26" />
    </Icon>
  );
}

function PinIcon({ className }: { className: string }) {
  return (
    <Icon className={className}>
      <path d="M15 29 C12 22 6 17 6 11 A9 9 0 0 1 24 11 C24 17 18 22 15 29 Z" />
      <circle cx="15" cy="11" r="1.5" fill="currentColor" />
    </Icon>
  );
}

function CarIcon({ className }: { className: string }) {
  return (
    <Icon className={className}>
      <path d="M2 12 H28 M5 12 L8 5 H22 L25 12 L27 15 V26 H22 V23 H8 V26 H3 V15 Z" />
      <path d="M6 17 H10 M20 17 H24 M11 22 L13 18 H17 L19 22" />
    </Icon>
  );
}

function WorkerIcon({ className }: { className: string }) {
  return (
    <Icon className={className}>
      <circle cx="15" cy="10" r="7" />
      <path d="M5 28 C5 21 9 18 12 16 L21 25 M25 28 C25 21 21 18 18 16 L9 25" />
    </Icon>
  );
}

function CashIcon({ className }: { className: string }) {
  return (
    <Icon className={className}>
      <rect x="1" y="6" width="28" height="18" />
      <path d="M1 9 H4 V6 M26 6 V9 H29 M1 21 H4 V24 M26 24 V21 H29" />
      <path d="M12 12 H15 V20 M12 20 H18 M7 15 H9 M21 15 H23" />
    </Icon>
  );
}

function AddButton({ label }: { label: string }) {
  return (
    <button
      aria-label={label}
      className="flex size-7 items-center justify-center rounded-full border-2 border-neutral-900 text-neutral-900"
    >
      <Plus className="size-[18px]" strokeWidth={2.2} />
    </button>
  );
}

/* ---------- Left column ---------- */

const stats = [
  { icon: FlagIcon, text: "8:00 AM", box: "w-12" },
  { icon: CheckeredFlagIcon, text: "1:20 PM", box: "w-12" },
  { icon: RoadIcon, text: "6.72 km", box: "w-12" },
  { icon: PinIcon, text: "9", box: "" },
  { icon: CarIcon, text: "10min", box: "" },
  { icon: WorkerIcon, text: "4h10", box: "" },
  { icon: CashIcon, text: "€101.38", box: "" },
];

function RouteSummary() {
  return (
    <section className="rounded border-2 border-neutral-200 bg-white px-[18px] pt-3 pb-2.5 shadow-[0_0_24px_rgba(60,60,100,0.08)]">
      <ul className="flex items-center justify-between pr-1 pl-2 text-lg leading-[26px] text-neutral-500">
        {stats.map(({ icon: StatIcon, text, box }) => (
          <li key={text} className="flex items-center gap-2">
            <StatIcon className="size-[30px] shrink-0" />
            <span className={box}>{text}</span>
          </li>
        ))}
      </ul>
      <div className="mt-3 flex gap-2 text-sm font-semibold text-neutral-800">
        <span className="rounded-full bg-[#eeeffc] px-3.5 leading-[30px]">PALLETS : 7 / 12 (UNITS)</span>
        <span className="rounded-full bg-[#eeeffc] px-3.5 leading-[30px]">WEIGHT : 1400 / 3000 (KG)</span>
      </div>
    </section>
  );
}

function MapPanel() {
  return (
    <section className="relative min-h-0 flex-1 overflow-hidden">
      <CityMap />
      <div className="absolute right-[15px] bottom-36 flex w-[58px] flex-col items-center rounded-xs bg-white shadow-md">
        <button aria-label="Zoom in" className="flex h-[58px] w-full items-center justify-center">
          <svg viewBox="0 0 26 26" className="size-[26px] fill-neutral-600">
            <path d="M10 0 H16 V10 H26 V16 H16 V26 H10 V16 H0 V10 H10 Z" />
          </svg>
        </button>
        <span className="h-0.5 w-11 bg-neutral-200" />
        <button aria-label="Zoom out" className="flex h-[58px] w-full items-center justify-center">
          <svg viewBox="0 0 26 26" className="size-[26px] fill-neutral-600">
            <path d="M0 10 H26 V16 H0 Z" />
          </svg>
        </button>
      </div>
    </section>
  );
}

/* ---------- Right column ---------- */

function Field({ label, children }: { label: string; children?: ReactNode }) {
  return (
    <p>
      <span className="font-semibold">{label} :</span> {children}
    </p>
  );
}

type Stop = {
  order: number;
  name: string;
  address: string;
  phone: string;
  hours: string;
  time: string;
  confirmed: boolean;
  workOrder: string;
};

const stops: Stop[] = [
  {
    order: 1,
    name: "Marie Henry",
    address: "72 Rue de la Paix 75016 Paris",
    phone: "+33 6 12 34 56 78",
    hours: "Always open",
    time: "08:01",
    confirmed: true,
    workOrder: "18044544",
  },
  {
    order: 2,
    name: "Antoine Dupont",
    address: "79 Rue de la Paix 75016 Paris",
    phone: "+33 6 12 34 56 78",
    hours: "Always open",
    time: "08:41",
    confirmed: false,
    workOrder: "",
  },
];

function StopCard({ stop }: { stop: Stop }) {
  return (
    <article className="shrink-0 rounded-xs border border-neutral-300 bg-white text-lg leading-[26px] text-neutral-900 shadow-[0_0_24px_rgba(60,60,100,0.1)]">
      <header className="flex h-[84px] items-center bg-[#efefef] pr-6 pl-[15px]">
        <span className="rounded-full bg-[#0669b2] px-[11px] text-[15px] leading-7 font-bold text-white">
          {stop.order}
        </span>
        <div className="ml-[17px] flex-1 pb-0.5">
          <h2 className="text-2xl leading-8 font-semibold">{stop.name}</h2>
          <div className="text-[19px]">
            <Field label="Address">{stop.address}</Field>
          </div>
        </div>
        {stop.confirmed && (
          <span className="mr-1.5 rounded-xs bg-[#4caf57] px-2.5 text-[15px] leading-[30px] font-bold text-white">
            CONFIRMED
          </span>
        )}
        <span className="rounded-xs bg-[#0669b2] px-2 text-[15px] leading-[30px] font-bold text-white">
          {stop.time}
        </span>
        <button aria-label="More actions" className="ml-2.5 pb-1">
          <svg viewBox="0 0 22 6" className="h-1.5 w-[22px] fill-neutral-900">
            <circle cx="3" cy="3" r="2" />
            <circle cx="11" cy="3" r="2" />
            <circle cx="19" cy="3" r="2" />
          </svg>
        </button>
      </header>

      <div className="px-[25px] pt-[11px] pb-6">
        <h3 className="text-2xl leading-8 font-semibold">Customer details</h3>
        <div className="mt-2 grid grid-cols-2 gap-x-10">
          <div className="text-[17px]">
            <p>
              <span className="font-semibold">Mobile Number</span> :{" "}
              <a
                href="tel:+33612345678"
                className="text-[#0669b2] underline underline-offset-[3px]"
              >
                {stop.phone}
              </a>
            </p>
            <Field label="Opening hours">{stop.hours}</Field>
          </div>
          <div>
            <p className="font-semibold">Customer attached files:</p>
            <div className="mt-1 ml-[25px] flex">
              <AddButton label="Add customer file" />
            </div>
          </div>
        </div>
      </div>

      <hr className="mx-[22px] border-neutral-300" />

      <div className="px-[25px] pt-[19px] pb-3">
        <h3 className="text-2xl leading-8 font-semibold">Work order details</h3>
        <div className="mt-2 grid grid-cols-2 gap-x-10">
          <div className="text-[17px]">
            <p>
              <span className="font-semibold">Duration</span> : 40min
            </p>
            <Field label="Time slot">08:00 ↔ 10:00</Field>
            <Field label="Assigned field worker" />
            <p className="flex items-center gap-1.5">
              <span className="size-[15px] rounded-full border-2 border-neutral-900 bg-[#a97bf8]" />
              Julia Fernandez
            </p>
            <Field label="Id">{stop.workOrder}</Field>
          </div>
          <div>
            <p className="font-semibold">Work order attached files:</p>
            <div className="mt-1 ml-[25px] flex gap-[18px]">
              <button aria-label="Image file" className="text-[#eeb23c]">
                <svg viewBox="0 0 28 28" className="size-7" fill="none" stroke="currentColor" strokeWidth="2">
                  <path d="M4 1 H17 L24 8 V27 H4 Z M17 1 V8 H24" />
                  <path d="M7 19 L11 14 L14 18 L17 16 L20 19" />
                  <circle cx="19" cy="13" r="1" fill="currentColor" stroke="none" />
                </svg>
              </button>
              <button aria-label="PDF file" className="text-[#d9534f]">
                <svg viewBox="0 0 28 28" className="size-7" fill="none" stroke="currentColor" strokeWidth="2">
                  <path d="M4 1 H24 V27 H4 Z" />
                  <path d="M13 8 C14 13 15 16 20 18 M14 12 C13 17 11 19 8 21 M8 20 C11 17 15 17 20 18" />
                </svg>
              </button>
              <AddButton label="Add work order file" />
            </div>
          </div>
        </div>
      </div>
    </article>
  );
}

function StopList() {
  return (
    <div className="flex min-h-0 min-w-0 flex-col overflow-y-auto pt-[11px] pr-[11px] pl-[23px] [scrollbar-width:none]">
      <button className="ml-1 flex shrink-0 items-center gap-3 self-start rounded-full bg-[#efefef] px-8 text-lg leading-[39px] text-neutral-500">
        <svg viewBox="0 0 14 14" className="size-3.5" fill="none" stroke="currentColor">
          <path d="M1 1 H13 L9 7 V11 L6 13 V7 Z M3 4 H11" />
        </svg>
        Show display options
      </button>

      <section className="mt-[11px] flex shrink-0 items-center rounded-xs border border-neutral-300 bg-[#efefef] py-2 pl-6 text-lg leading-[26px] text-neutral-900 shadow-[0_0_24px_rgba(60,60,100,0.1)]">
        <FlagIcon className="size-[30px]" />
        <div className="ml-[54px]">
          <Field label="Planned route start time">03/09/2024 08:00</Field>
          <Field label="Departure from vehicle parking area">
            10 Avenue de l'Opéra, Paris, France
          </Field>
        </div>
      </section>

      <div className="mt-[21px] flex flex-col gap-[22px]">
        {stops.map((stop) => (
          <StopCard key={stop.order} stop={stop} />
        ))}
      </div>
    </div>
  );
}

export default function App() {
  return (
    <div className="flex h-screen bg-[#ddf7f4] px-[95px] py-[89px] font-[Inter,sans-serif]">
      <main className="flex min-w-0 flex-1 flex-col overflow-hidden rounded-[20px] bg-white shadow-[0_6px_44px_rgba(0,40,30,0.16)]">
        <header className="flex h-[55px] shrink-0 items-center justify-between pt-2">
          <div className="flex w-1/2 items-center justify-center gap-2.5 pl-2">
            <h1 className="text-[28px] leading-9 font-light text-neutral-800">
              Routes - Julia Fernandez
            </h1>
            <span className="size-[30px] rounded-full border-2 border-neutral-900 bg-[#a97bf8]" />
            <button
              aria-label="Next route"
              className="flex size-7 items-center justify-center rounded-full border-2 border-neutral-900"
            >
              <ChevronRight className="size-5" />
            </button>
          </div>
          <button
            aria-label="Close"
            className="mr-[35px] flex h-[46px] w-[78px] items-center justify-center rounded-xs border border-neutral-400 text-neutral-700"
          >
            <X className="size-[18px]" strokeWidth={1.5} />
          </button>
        </header>

        <div className="flex min-h-0 flex-1">
          <div className="grid min-w-0 flex-1 grid-cols-[5fr_6fr] grid-rows-1 pl-[19px]">
            <div className="flex min-h-0 min-w-0 flex-col gap-6 pt-3">
              <RouteSummary />
              <MapPanel />
            </div>
            <StopList />
          </div>
          <div className="flex w-[22px] justify-center border-l-2 border-neutral-200 bg-neutral-50 pt-1">
            <div className="h-1/3 w-3 rounded-full bg-[#c1c1c1]" />
          </div>
        </div>
      </main>
    </div>
  );
}
